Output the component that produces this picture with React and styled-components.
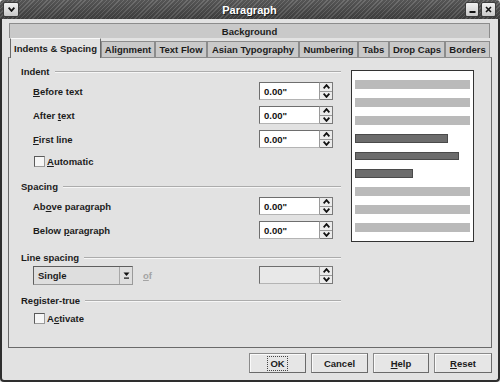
import React from "react";
import styled, { createGlobalStyle } from "styled-components";

const GlobalStyle = createGlobalStyle`
  *, *::before, *::after { box-sizing: border-box; }
  html, body { margin: 0; padding: 0; background: #e2e2e2; }
  body {
    font-family: "Liberation Sans", Arial, sans-serif;
    font-size: 9.5px;
    font-weight: bold;
    color: #1c1c1c;
  }
`;

const Window = styled.div`
  width: 500px;
  height: 382px;
  display: flex;
  flex-direction: column;
`;

const TitleBar = styled.div`
  height: 19px;
  display: grid;
  grid-template-columns: 1fr auto 1fr;
  align-items: center;
  padding: 0 4px 0 3px;
  border-radius: 4px 4px 0 0;
  background:
    linear-gradient(rgba(255, 255, 255, 0.08), rgba(0, 0, 0, 0.15)),
    repeating-linear-gradient(135deg, #646464 0 1px, #474747 1px 3px);
`;

const Title = styled.div`
  color: #fff;
  font-size: 11px;
  text-shadow: 1px 1px 0 #1e1e1e;
`;

const TitleButtons = styled.div`
  display: flex;
  gap: 2px;
  justify-self: end;
`;

const WinButton = styled.div`
  width: ${(p) => p.$w || 15}px;
  height: 15px;
  border: 1px solid #3a3a3a;
  border-radius: 2px;
  background: linear-gradient(#f0f0f0, #c8c8c8);
  display: flex;
  align-items: center;
  justify-content: center;
`;

const Frame = styled.div`
  flex: 1;
  display: flex;
  flex-direction: column;
  padding: 4px 6px 0;
  background: #e2e2e2;
  border: 2px solid #2e2e2e;
  border-top: none;
  border-radius: 0 0 4px 4px;
`;

const TabStrip = styled.div`
  margin: 0 2px 0 1px;
`;

const BackTab = styled.div`
  height: 15px;
  border: 1px solid #8c8c8c;
  border-bottom: none;
  background: #c9c9c9;
  display: flex;
  align-items: center;
  justify-content: center;
`;

const TabRow = styled.div`
  height: 19px;
  display: flex;
  align-items: flex-end;
  padding-left: 1px;
`;

const Tab = styled.div`
  width: ${(p) => p.$w}px;
  height: ${(p) => (p.$active ? 20 : 16)}px;
  margin-bottom: ${(p) => (p.$active ? -1 : 0)}px;
  position: relative;
  z-index: ${(p) => (p.$active ? 1 : 0)};
  border: 1px solid ${(p) => (p.$active ? "#6a6a6a" : "#8c8c8c")};
  border-top-color: ${(p) => (p.$active ? "#fafafa" : "#8c8c8c")};
  border-bottom: none;
  background: ${(p) => (p.$active ? "#e2e2e2" : "#c9c9c9")};
  display: flex;
  align-items: center;
  justify-content: center;
  white-space: nowrap;
`;

const Panel = styled.div`
  height: 291px;
  display: flex;
  align-items: flex-start;
  padding: 6px 0 0 12px;
  border: 1px solid #6a6a6a;
  border-top-color: #8c8c8c;
`;

const LeftCol = styled.div`
  width: 320px;
  display: flex;
  flex-direction: column;
  gap: 8px;
`;

const Group = styled.div`
  display: flex;
  flex-direction: column;
`;

const GroupHeader = styled.div`
  height: 14px;
  display: flex;
  align-items: center;
  gap: 5px;

  &::after {
    content: "";
    flex: 1;
    height: 1px;
    background: #acacac;
    box-shadow: 0 1px 0 #f6f6f6;
  }
`;

const GroupBody = styled.div`
  display: flex;
  flex-direction: column;
  padding: 1px 0 0 12px;
`;

const FieldRow = styled.div`
  height: ${(p) => p.$h || 24}px;
  display: grid;
  grid-template-columns: 226px auto;
  align-items: center;
`;

const CheckRow = styled.label`
  height: 20px;
  display: flex;
  align-items: center;
  gap: 2px;
  padding-left: 1px;
`;

const Box = styled.span`
  width: 11px;
  height: 11px;
  border: 1px solid #5a5a5a;
  border-right-color: #9a9a9a;
  border-bottom-color: #9a9a9a;
  background: #f6f6f6;
`;

const U = styled.span`
  text-decoration: underline;
  text-underline-offset: 1px;
`;

const Spin = styled.div`
  display: flex;
  height: 18px;
`;

const SpinInput = styled.div`
  width: 61px;
  height: 18px;
  border: 1px solid #6e6e6e;
  border-right-color: #9a9a9a;
  border-bottom-color: #b4b4b4;
  background: ${(p) => (p.$disabled ? "#e8e8e8" : "#ffffff")};
  padding-left: 4px;
  display: flex;
  align-items: center;
  color: #111;
`;

const SpinButtons = styled.div`
  width: 13px;
  height: 18px;
  border: 1px solid #7a7a7a;
  border-left: none;
  display: flex;
  flex-direction: column;
  background: #ececec;
`;

const SpinHalf = styled.div`
  flex: 1;
  display: flex;
  align-items: center;
  justify-content: center;
  & + & { border-top: 1px solid #9a9a9a; }
`;

const SelectWrap = styled.div`
  display: flex;
  align-items: center;
  gap: 10px;
`;

const Select = styled.div`
  width: 100px;
  height: 19px;
  display: flex;
  border: 1px solid #5e5e5e;
  border-right-color: #9a9a9a;
  border-bottom-color: #9a9a9a;
  background: #dedede;
`;

const SelectValue = styled.div`
  flex: 1;
  display: flex;
  align-items: center;
  padding-left: 4px;
`;

const SelectButton = styled.div`
  width: 13px;
  display: flex;
  align-items: center;
  justify-content: center;
  border-left: 1px solid #a8a8a8;
`;

const Muted = styled.span`
  color: #a4a4a4;
`;

const Preview = styled.div`
  width: 123px;
  height: 172px;
  margin: 6px 0 0 10px;
  padding: 9px 3px;
  border: 1px solid #333;
  background: #fff;
  display: flex;
  flex-direction: column;
  gap: 9px;
`;

const Bar = styled.div`
  height: 9px;
  width: ${(p) => (p.$w ? `${p.$w}px` : "100%")};
  background: ${(p) => (p.$dark ? "#6c6c6c" : "#bababa")};
  border: ${(p) => (p.$dark ? "1px solid #4a4a4a" : "none")};
`;

const ButtonRow = styled.div`
  display: flex;
  justify-content: flex-end;
  gap: 5px;
  padding-top: 5px;
`;

const Button = styled.div`
  width: ${(p) => p.$w}px;
  height: 20px;
  border: 1px solid #8a8a8a;
  border-right-color: #6a6a6a;
  border-bottom-color: #6a6a6a;
  background: #e6e6e6;
  box-shadow: inset 1px 1px 0 #fafafa;
  display: flex;
  align-items: center;
  justify-content: center;
`;

const Focus = styled.span`
  outline: 1px dotted #444;
  outline-offset: 1px;
  padding: 0 1px;
`;

const Chevron = ({ up }) => (
  <svg width="7" height="5" viewBox="0 0 7 5">
    <polyline
      points={up ? "0.6,4.4 3.5,1.1 6.4,4.4" : "0.6,0.6 3.5,3.9 6.4,0.6"}
      fill="none"
      stroke="#111"
      strokeWidth="1.8"
    />
  </svg>
);

const SpinBox = ({ value, disabled }) => (
  <Spin>
    <SpinInput $disabled={disabled}>{value}</SpinInput>
    <SpinButtons>
      <SpinHalf>
        <Chevron up />
      </SpinHalf>
      <SpinHalf>
        <Chevron />
      </SpinHalf>
    </SpinButtons>
  </Spin>
);

const tabs = [
  { label: "Indents & Spacing", w: 91, active: true },
  { label: "Alignment", w: 54 },
  { label: "Text Flow", w: 52 },
  { label: "Asian Typography", w: 92 },
  { label: "Numbering", w: 59 },
  { label: "Tabs", w: 31 },
  { label: "Drop Caps", w: 56 },
  { label: "Borders", w: 45 },
];

const bars = [
  {}, {}, {},
  { dark: true, w: 93 },
  { dark: true, w: 104 },
  { dark: true, w: 58 },
  {}, {}, {},
];

const Field = ({ children, value = '0.00"' }) => (
  <FieldRow>
    <span>{children}</span>
    <SpinBox value={value} />
  </FieldRow>
);

const App = () => {
  return (
    <Window>
      <GlobalStyle />
      <TitleBar>
        <WinButton $w={16}>
          <Chevron />
        </WinButton>
        <Title>Paragraph</Title>
        <TitleButtons>
          <WinButton $w={14}>
            <svg width="7" height="7" viewBox="0 0 7 7">
              <rect x="0.5" y="5" width="6" height="2" fill="#111" />
            </svg>
          </WinButton>
          <WinButton>
            <svg width="7" height="7" viewBox="0 0 7 7">
              <path d="M1 1 L6 6 M6 1 L1 6" stroke="#111" strokeWidth="1.6" />
            </svg>
          </WinButton>
        </TitleButtons>
      </TitleBar>

      <Frame>
        <TabStrip>
          <BackTab>Background</BackTab>
          <TabRow>
            {tabs.map((t) => (
              <Tab key={t.label} $w={t.w} $active={t.active}>
                {t.label}
              </Tab>
            ))}
          </TabRow>
        </TabStrip>

        <Panel>
          <LeftCol>
            <Group>
              <GroupHeader>Indent</GroupHeader>
              <GroupBody>
                <Field>
                  <U>B</U>efore text
                </Field>
                <Field>
                  After <U>t</U>ext
                </Field>
                <Field>
                  <U>F</U>irst line
                </Field>
                <CheckRow>
                  <Box />
                  <span>
                    <U>A</U>utomatic
                  </span>
                </CheckRow>
              </GroupBody>
            </Group>

            <Group>
              <GroupHeader>Spacing</GroupHeader>
              <GroupBody>
                <Field>
                  Ab<U>o</U>ve paragraph
                </Field>
                <Field>
                  Below <U>p</U>aragraph
                </Field>
              </GroupBody>
            </Group>

            <Group>
              <GroupHeader>Line spacing</GroupHeader>
              <GroupBody>
                <FieldRow $h={20}>
                  <SelectWrap>
                    <Select>
                      <SelectValue>Single</SelectValue>
                      <SelectButton>
                        <svg width="7" height="7" viewBox="0 0 7 7">
                          <polygon points="0.5,0.5 6.5,0.5 3.5,4" fill="#111" />
                          <rect x="1" y="5.5" width="5" height="1.2" fill="#111" />
                        </svg>
                      </SelectButton>
                    </Select>
                    <Muted>
                      <U>o</U>f
                    </Muted>
                  </SelectWrap>
                  <SpinBox value="" disabled />
                </FieldRow>
              </GroupBody>
            </Group>

            <Group>
              <GroupHeader>Register-true</GroupHeader>
              <GroupBody>
                <CheckRow>
                  <Box />
                  <span>
                    A<U>c</U>tivate
                  </span>
                </CheckRow>
              </GroupBody>
            </Group>
          </LeftCol>

          <Preview>
            {bars.map((b, i) => (
              <Bar key={i} $dark={b.dark} $w={b.w} />
            ))}
          </Preview>
        </Panel>

        <ButtonRow>
          <Button $w={57}>
            <Focus>OK</Focus>
          </Button>
          <Button $w={57}>Cancel</Button>
          <Button $w={56}>
            <span>
              <U>H</U>elp
            </span>
          </Button>
          <Button $w={58}>
            <span>
              <U>R</U>eset
            </span>
          </Button>
        </ButtonRow>
      </Frame>
    </Window>
  );
};

export default App;
